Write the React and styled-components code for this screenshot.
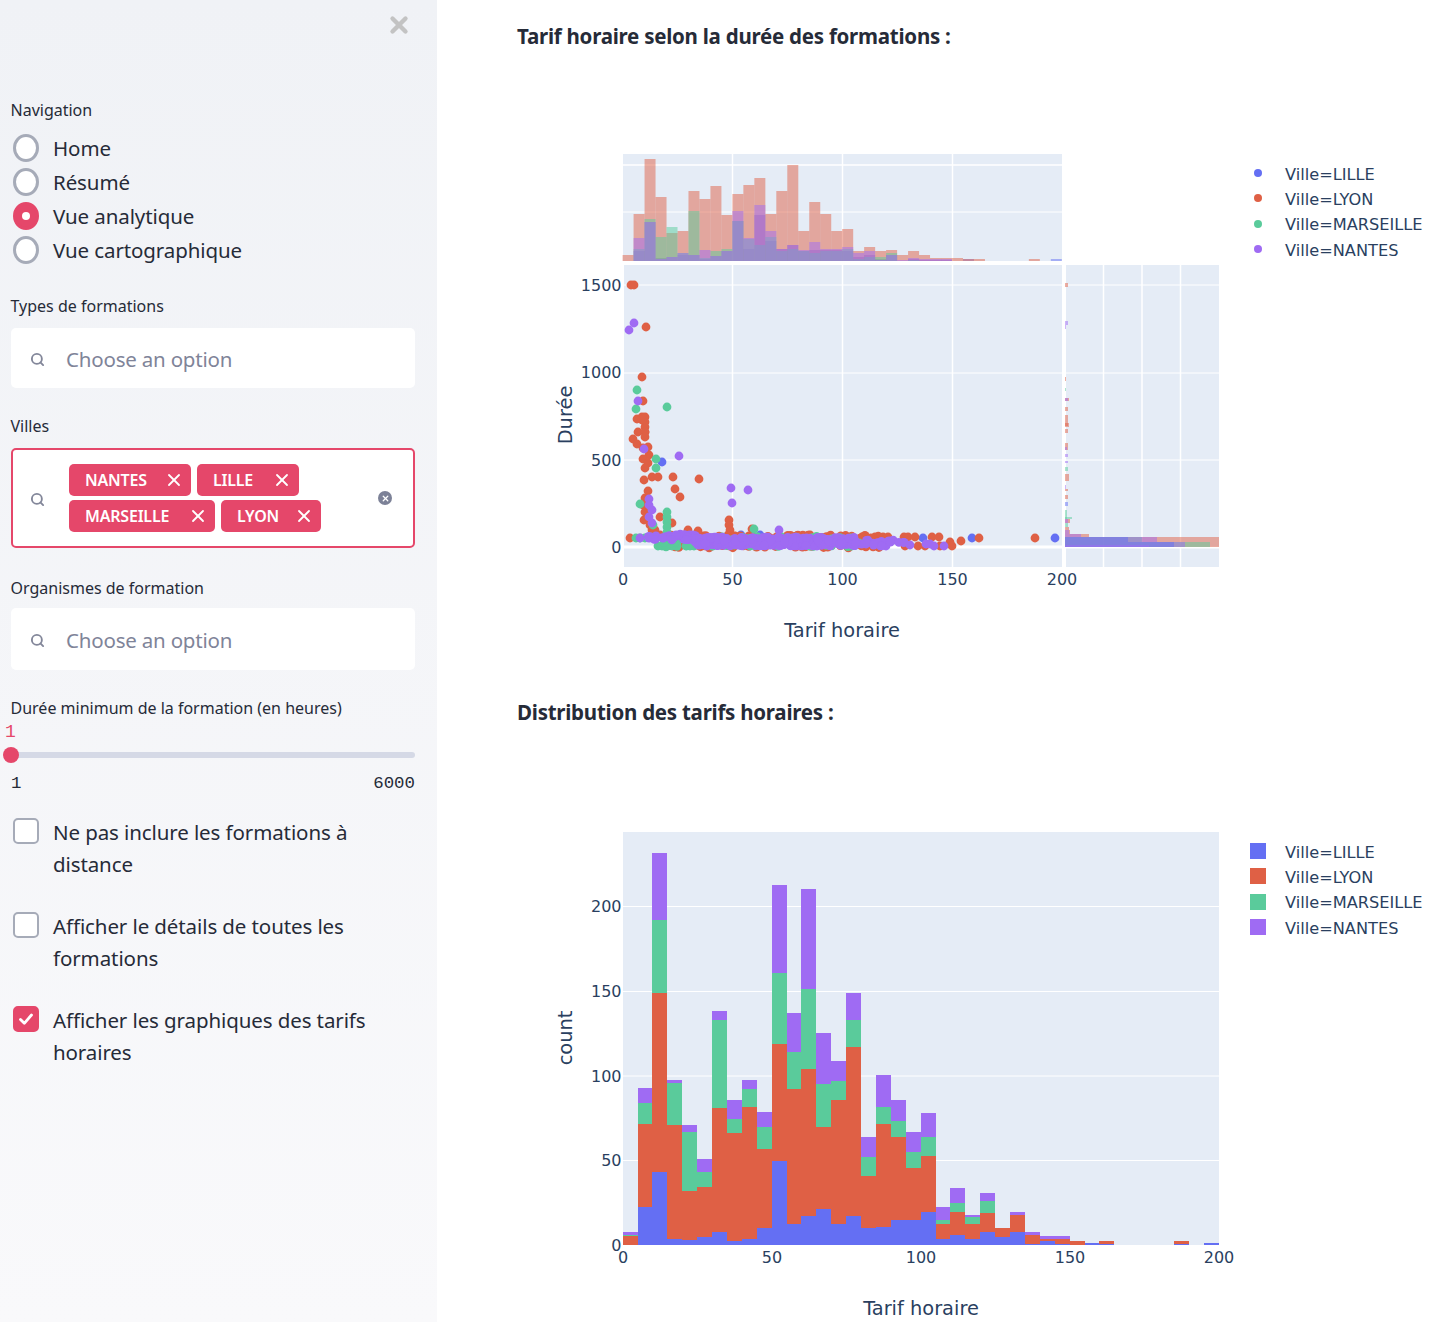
import React from 'react';
import styled, { createGlobalStyle } from 'styled-components';
import { Search, X } from 'lucide-react';

const RED = '#DF6045';
const BLUE = '#646FF3';
const GREEN = '#5ACB9B';
const PURPLE = '#9F6BF3';
const ACCENT = '#E5476A';
const CITY = [BLUE, RED, GREEN, PURPLE];

const GlobalStyle = createGlobalStyle`
    html, body {
        margin: 0;
        padding: 0;
        background: #fff;
        overflow: hidden;
    }
`;

const Page = styled.div`
    display: flex;
    width: 1453px;
    height: 1322px;
    overflow: hidden;
    font-family: 'Noto Sans', sans-serif;
    color: #262b38;
`;

const Sidebar = styled.aside`
    box-sizing: border-box;
    width: 437px;
    flex: none;
    padding: 0 22px 0 11px;
    background: linear-gradient(180deg, #f0f2f6 0%, #f9f9fb 100%);
`;

const CloseRow = styled.div`
    display: flex;
    justify-content: flex-end;
    height: 100px;
    padding: 12px 3px 0 0;
    box-sizing: border-box;
    color: #c3c3c3;
`;

const Field = styled.div`
    margin-top: ${({ $top }) => $top || 0}px;
`;

const Label = styled.div`
    font-size: 16px;
    line-height: 20px;
    margin-left: -0.5px;
    margin-bottom: ${({ $gap }) => $gap || 12}px;
`;

const Radio = styled.div`
    display: flex;
    align-items: center;
    height: 34px;
    padding-left: 2px;
    font-size: 20.5px;
    letter-spacing: -0.1px;
`;

const RadioDot = styled.span`
    box-sizing: border-box;
    flex: none;
    width: 26px;
    height: 28px;
    margin-right: 14px;
    border-radius: 50%;
    display: flex;
    align-items: center;
    justify-content: center;
    border: 3px solid ${({ $on }) => ($on ? ACCENT : '#a6abb8')};
    background: ${({ $on }) => ($on ? ACCENT : '#fff')};
    &::after {
        content: '';
        display: ${({ $on }) => ($on ? 'block' : 'none')};
        width: 8px;
        height: 8px;
        border-radius: 50%;
        background: #fff;
    }
`;

const SelectBox = styled.div`
    box-sizing: border-box;
    display: flex;
    align-items: center;
    height: ${({ $h }) => $h}px;
    padding-left: 19px;
    background: #fff;
    border-radius: 5px;
    border: ${({ $active }) => ($active ? `2px solid ${ACCENT}` : 'none')};
    ${({ $active }) => $active && 'padding-left: 17px; padding-right: 21px;'}
`;

const SearchIcon = styled(Search)`
    flex: none;
    width: 15px;
    height: 15px;
    margin-top: 3px;
    color: #83879a;
`;

const Placeholder = styled.span`
    margin: 2px 0 0 21px;
    font-size: 20.5px;
    letter-spacing: -0.2px;
    color: #7f8499;
`;

const TagWrap = styled.div`
    flex: 1;
    display: flex;
    flex-wrap: wrap;
    gap: 4px 6px;
    width: 290px;
    margin-left: 24px;
`;

const Tag = styled.span`
    box-sizing: border-box;
    display: flex;
    align-items: center;
    justify-content: space-between;
    width: ${({ $w }) => $w}px;
    height: 32px;
    padding: 0 7px 0 16px;
    border-radius: 5px;
    background: ${ACCENT};
    color: #fff;
    font-size: 16px;
    font-weight: 600;
    letter-spacing: -0.2px;
`;

const ClearDot = styled.span`
    flex: none;
    display: flex;
    align-items: center;
    justify-content: center;
    width: 14px;
    height: 14px;
    border-radius: 50%;
    background: #7c8197;
    color: #fff;
`;

const SliderValue = styled.div`
    font-family: 'Liberation Mono', monospace;
    font-size: 18px;
    line-height: 20px;
    color: ${ACCENT};
    margin: -8px 0 0 -6px;
`;

const Track = styled.div`
    position: relative;
    height: 6px;
    margin-top: 10px;
    border-radius: 3px;
    background: #d5d9e6;
`;

const Thumb = styled.span`
    position: absolute;
    left: -8px;
    top: -5px;
    width: 16px;
    height: 16px;
    border-radius: 50%;
    background: ${ACCENT};
`;

const SliderEnds = styled.div`
    display: flex;
    justify-content: space-between;
    margin-top: 16px;
    font-family: 'Liberation Mono', monospace;
    font-size: 17.4px;
    line-height: 20px;
`;

const Check = styled.div`
    display: flex;
    align-items: flex-start;
    padding-left: 2px;
    margin-top: ${({ $top }) => $top}px;
    font-size: 20.5px;
    letter-spacing: -0.1px;
    line-height: 32px;
`;

const CheckText = styled.span`
    margin-top: -1px;
`;

const CheckBox = styled.span`
    box-sizing: border-box;
    flex: none;
    display: flex;
    align-items: center;
    justify-content: center;
    width: 26px;
    height: 26px;
    margin: 1px 14px 0 0;
    border-radius: 5px;
    border: 2px solid ${({ $on }) => ($on ? ACCENT : '#a6abb8')};
    background: ${({ $on }) => ($on ? ACCENT : '#fff')};
`;

const Main = styled.main`
    flex: 1;
    min-width: 0;
    padding: 20px 0 0 80px;
`;

const Heading = styled.h2`
    margin: 0;
    font-size: 20.5px;
    letter-spacing: -0.25px;
    line-height: 32px;
    font-weight: 700;
    color: #262b38;
`;

const ChartSvg = styled.svg`
    display: block;
    margin-top: ${({ $top }) => $top || 0}px;
    overflow: visible;
`;

const Tick = styled.text`
    font-family: 'DejaVu Sans', Verdana, sans-serif;
    font-size: 16px;
    fill: #2a3f5f;
`;

const LegendText = styled(Tick)`
    font-size: 16.2px;
`;

const AxisTitle = styled.text`
    font-family: 'DejaVu Sans', Verdana, sans-serif;
    font-size: 19.4px;
    fill: #2a3f5f;
`;

// hauteurs en px depuis la base, cumulees : lille, lyon, marseille, nantes
const STACK = [
    [0, 9, 10, 13], [38, 121, 142, 157], [73, 252, 325, 392], [6, 120, 162, 165],
    [5, 54, 113, 120], [8, 58, 73, 86], [13, 137, 225, 234], [4, 112, 126, 145],
    [6, 138, 156, 165], [17, 96, 118, 133], [84, 201, 272, 360], [21, 156, 193, 232],
    [29, 176, 256, 356], [36, 118, 161, 212], [21, 145, 164, 184], [29, 198, 225, 252],
    [17, 69, 88, 108], [18, 121, 138, 170], [25, 108, 124, 145], [25, 77, 93, 113],
    [33, 89, 108, 132], [6, 21, 25, 38], [10, 33, 42, 57], [6, 21, 28, 30],
    [13, 32, 44, 52], [8, 17, 17, 17], [13, 30, 30, 33], [1, 10, 10, 13],
    [4, 6, 6, 9], [1, 6, 6, 9], [0, 4, 4, 4], [2, 2, 2, 2], [1, 4, 4, 4],
    [0, 0, 0, 0], [0, 0, 0, 0], [0, 0, 0, 0], [0, 0, 0, 0], [1, 4, 4, 4],
    [0, 0, 0, 0], [2, 2, 2, 2],
];

const TOP_RED = [6, 47, 102, 64, 28, 30, 70, 62, 75, 46, 67, 76, 83, 47, 70, 96, 30, 59, 47, 30, 32, 10, 14, 10, 11, 6, 10, 6, 3, 3, 3, 2, 2, 0, 0, 0, 0, 2];
const TOP_BLUE = [0, 10, 39, 3, 4, 6, 6, 2, 5, 10, 40, 12, 46, 20, 12, 16, 10, 11, 11, 11, 10, 4, 6, 2, 6, 0, 2, 1, 1, 1, 0, 2, 0, 0, 0, 0, 0, 0, 0, 2];
const TOP_GREEN = [0, 12, 42, 24, 34, 8, 50, 3, 10, 12, 40, 22, 16, 24, 10, 12, 10, 8, 10, 10, 12, 2, 4, 4, 8, 0, 1];
const TOP_PURPLE = [0, 23, 39, 2, 4, 8, 6, 11, 5, 10, 50, 23, 56, 30, 12, 16, 11, 19, 12, 12, 14, 8, 10, 1, 6, 1, 3, 2, 2, 2];

// barres de droite : y, hauteur, largeur, ville
const SIDE = [
    [283, 4, 3, 1], [321, 4, 3, 3], [325, 4, 1, 3], [377, 4, 1, 1], [388, 3, 1, 2],
    [398, 3, 4, 1], [398, 3, 3, 3], [407, 4, 3, 1], [415, 11, 3, 1], [423, 4, 4, 1],
    [429, 4, 3, 1], [443, 7, 3, 1], [447, 3, 2, 3], [454, 3, 3, 3], [461, 2, 3, 3],
    [467, 4, 3, 2], [474, 7, 4, 1], [485, 4, 1, 3], [489, 2, 3, 1], [495, 4, 3, 1],
    [502, 4, 3, 0], [510, 9, 2, 2], [517, 2, 7, 2], [519, 4, 5, 1], [519, 4, 3, 3],
    [523, 4, 3, 2], [527, 3, 4, 1], [530, 4, 5, 1], [530, 4, 4, 3],
    [534, 3, 24, 1], [534, 3, 16, 3],
    [537, 5, 154, 1], [537, 5, 77, 2], [537, 5, 92, 3], [537, 5, 63, 0],
    [542, 5, 154, 1], [542, 5, 145, 2], [542, 5, 120, 3], [542, 5, 109, 0],
    [545, 2, 84, 3],
];

const P_RED = [
    [631, 285], [634, 285], [646, 327], [642, 377], [643, 401], [642, 417], [645, 417], [645, 422],
    [645, 427], [645, 432], [637, 419], [642, 420], [638, 432], [645, 432], [645, 437], [633, 439],
    [637, 444], [643, 448], [648, 447], [649, 455], [643, 459], [648, 463], [645, 468], [644, 480],
    [652, 477], [658, 477], [673, 477], [699, 479], [675, 489], [680, 497], [648, 491], [645, 498],
    [643, 505], [645, 512], [644, 520], [660, 517], [672, 523], [688, 530], [698, 531], [729, 520],
    [729, 525], [730, 530], [728, 535], [752, 529], [630, 538], [652, 530], [783, 538], [810, 535],
    [847, 537], [862, 537], [875, 537], [883, 537], [888, 537], [904, 537], [908, 537], [915, 537],
    [932, 537], [939, 537], [950, 542], [952, 546], [961, 541], [979, 538], [1035, 538], [918, 546],
    [905, 546], [925, 546], [940, 546], [650, 525], [655, 530], [660, 535], [665, 540],
];
const P_GREEN = [
    [637, 390], [636, 409], [667, 407], [656, 459], [656, 468], [640, 504], [667, 512], [667, 517],
    [667, 522], [667, 527], [667, 532], [653, 525], [754, 529], [658, 546], [662, 546], [667, 546],
    [672, 546], [686, 546], [690, 546], [694, 546], [699, 540], [716, 538], [722, 537], [750, 546],
    [636, 538], [640, 538], [645, 538],
];
const P_PURPLE = [
    [634, 323], [629, 330],
    [638, 401], [644, 449], [679, 456], [731, 488], [748, 490], [732, 503], [649, 499], [649, 505],
    [652, 510], [649, 517], [652, 523], [779, 530], [930, 544], [934, 546], [944, 546], [926, 544],
    [910, 545], [886, 546], [866, 544], [855, 545], [640, 538],
];
const P_BLUE = [[662, 462], [923, 538], [972, 538], [1055, 538], [741, 535], [760, 535]];

// la bande dense autour de zero
function band(seed, from, to, count, y0, spread) {
    const points = [];
    let s = seed;
    for (let i = 0; i < count; i++) {
        s = (s * 9301 + 49297) % 233280;
        const a = s / 233280;
        s = (s * 9301 + 49297) % 233280;
        const b = s / 233280;
        points.push([from + a * (to - from), y0 + b * spread]);
    }
    return points;
}

const ALL_POINTS = [
    { color: BLUE, points: [...P_BLUE, ...band(5, 700, 860, 30, 536, 10)] },
    { color: RED, points: [...P_RED, ...band(11, 668, 880, 200, 535, 13)] },
    { color: GREEN, points: [...P_GREEN, ...band(23, 650, 860, 80, 536, 11)] },
    {
        color: PURPLE,
        points: [
            ...P_PURPLE,
            ...band(37, 648, 700, 45, 534, 6),
            ...band(41, 695, 855, 340, 537, 9),
            ...band(53, 850, 905, 24, 540, 6),
        ],
    },
];

const TOP_SERIES = [
    [TOP_BLUE, BLUE],
    [TOP_RED, RED],
    [TOP_GREEN, GREEN],
    [TOP_PURPLE, PURPLE],
];

function Legend({ items, square, y }) {
    return items.map((name, i) => (
        <g key={name}>
            {square ? (
                <rect x="1250" y={y[i] - 8} width="16" height="16" fill={CITY[i]} />
            ) : (
                <circle cx="1258" cy={y[i]} r="4" fill={CITY[i]} />
            )}
            <LegendText x="1285" y={y[i] + 7 - (i === 2 ? 1 : 0)}>
                Ville={name}
            </LegendText>
        </g>
    ));
}

const CITIES = ['LILLE', 'LYON', 'MARSEILLE', 'NANTES'];

function JointChart() {
    return (
        <ChartSvg width="936" height="636" viewBox="517 60 936 636" $top={8}>
            <rect x="623" y="154" width="439" height="107" fill="#E5ECF6" />
            {[165, 212].map((y) => (
                <line key={y} x1="623" x2="1062" y1={y} y2={y} stroke="#fff" strokeWidth={y === 165 ? 1.5 : 1} />
            ))}
            {[732.5, 842.5, 952.5].map((x) => (
                <line key={x} x1={x} x2={x} y1="154" y2="261" stroke="#fff" strokeWidth="1.5" />
            ))}
            {TOP_SERIES.map(([values, color]) =>
                values.map((h, i) =>
                    h ? (
                        <rect key={`${color}${i}`} x={622.6 + i * 10.98} y={261 - h} width="10.98" height={h} fill={color} opacity="0.5" />
                    ) : null
                )
            )}

            <rect x="624" y="265" width="438" height="302" fill="#E5ECF6" />
            {[285, 373, 460].map((y) => (
                <line key={y} x1="624" x2="1062" y1={y} y2={y} stroke="#fff" />
            ))}
            <line x1="624" x2="1062" y1="547" y2="547" stroke="#fff" strokeWidth="3" />
            {[732.5, 842.5, 952.5].map((x) => (
                <line key={x} x1={x} x2={x} y1="265" y2="567" stroke="#fff" strokeWidth="1.5" />
            ))}
            {ALL_POINTS.map(({ color, points }) =>
                points.map(([x, y], i) => <circle key={`${color}${i}`} cx={x} cy={y} r="4.4" fill={color} />)
            )}

            <rect x="1066" y="265" width="153" height="302" fill="#E5ECF6" />
            {[285, 373, 460].map((y) => (
                <line key={y} x1="1066" x2="1219" y1={y} y2={y} stroke="#fff" />
            ))}
            <line x1="1066" x2="1219" y1="547.5" y2="547.5" stroke="#fff" strokeWidth="2" />
            {[1103.5, 1142, 1180.5].map((x) => (
                <line key={x} x1={x} x2={x} y1="265" y2="567" stroke="#fff" strokeWidth="1.5" />
            ))}
            {SIDE.map(([y, h, w, c], i) => (
                <rect key={i} x="1065" y={y} width={w} height={h} fill={CITY[c]} opacity="0.5" />
            ))}

            {[['1500', 285], ['1000', 372], ['500', 460], ['0', 547]].map(([t, y]) => (
                <Tick key={t} x="621.5" y={y + 6} textAnchor="end">
                    {t}
                </Tick>
            ))}
            {[['0', 623], ['50', 732.5], ['100', 842.5], ['150', 952.5], ['200', 1062]].map(([t, x]) => (
                <Tick key={t} x={x} y="585" textAnchor="middle">
                    {t}
                </Tick>
            ))}
            <AxisTitle x="842" y="637" textAnchor="middle">
                Tarif horaire
            </AxisTitle>
            <AxisTitle transform="translate(572 415) rotate(-90)" textAnchor="middle">
                Durée
            </AxisTitle>
            <Legend items={CITIES} y={[173, 198, 224, 249]} />
        </ChartSvg>
    );
}

function StackChart() {
    const base = 1245;
    return (
        <ChartSvg width="936" height="594" viewBox="517 728 936 594">
            <rect x="623" y="832" width="596" height="413" fill="#E5ECF6" />
            {[906.5, 991.5, 1076, 1160.5].map((y) => (
                <line key={y} x1="623" x2="1219" y1={y} y2={y} stroke="#fff" strokeWidth="1" />
            ))}
            {STACK.map((tops, i) =>
                tops.map((top, k) => {
                    const from = k === 0 ? 0 : tops[k - 1];
                    if (top <= from) return null;
                    return <rect key={k} x={622.6 + i * 14.9} y={base - top} width="14.9" height={top - from} fill={CITY[k]} shapeRendering="crispEdges" />;
                })
            )}
            {[['0', 1245], ['50', 1160], ['100', 1076], ['150', 991], ['200', 906]].map(([t, y]) => (
                <Tick key={t} x="621.5" y={y + 6} textAnchor="end">
                    {t}
                </Tick>
            ))}
            {[['0', 623], ['50', 772], ['100', 921], ['150', 1070], ['200', 1219]].map(([t, x]) => (
                <Tick key={t} x={x} y="1263" textAnchor="middle">
                    {t}
                </Tick>
            ))}
            <AxisTitle x="921" y="1315" textAnchor="middle">
                Tarif horaire
            </AxisTitle>
            <AxisTitle transform="translate(572 1038) rotate(-90)" textAnchor="middle">
                count
            </AxisTitle>
            <Legend items={CITIES} square y={[851, 876, 902, 927]} />
        </ChartSvg>
    );
}

function App() {
    return (
        <Page>
            <GlobalStyle />
            <Sidebar>
                <CloseRow>
                    <X size={26} strokeWidth={4} />
                </CloseRow>

                <Label $gap={11}>Navigation</Label>
                {['Home', 'Résumé', 'Vue analytique', 'Vue cartographique'].map((name) => (
                    <Radio key={name}>
                        <RadioDot $on={name === 'Vue analytique'} />
                        {name}
                    </Radio>
                ))}

                <Field $top={29}>
                    <Label>Types de formations</Label>
                    <SelectBox $h={60}>
                        <SearchIcon strokeWidth={3} />
                        <Placeholder>Choose an option</Placeholder>
                    </SelectBox>
                </Field>

                <Field $top={28}>
                    <Label>Villes</Label>
                    <SelectBox $h={100} $active>
                        <SearchIcon strokeWidth={3} />
                        <TagWrap>
                            {[['NANTES', 122], ['LILLE', 102], ['MARSEILLE', 146], ['LYON', 100]].map(([name, w]) => (
                                <Tag key={name} $w={w}>
                                    {name}
                                    <X size={20} strokeWidth={2.2} />
                                </Tag>
                            ))}
                        </TagWrap>
                        <ClearDot>
                            <X size={9} strokeWidth={3.5} />
                        </ClearDot>
                    </SelectBox>
                </Field>

                <Field $top={30}>
                    <Label $gap={10}>Organismes de formation</Label>
                    <SelectBox $h={62}>
                        <SearchIcon strokeWidth={3} />
                        <Placeholder>Choose an option</Placeholder>
                    </SelectBox>
                </Field>

                <Field $top={28}>
                    <Label>Durée minimum de la formation (en heures)</Label>
                    <SliderValue>1</SliderValue>
                    <Track>
                        <Thumb />
                    </Track>
                    <SliderEnds>
                        <span>1</span>
                        <span>6000</span>
                    </SliderEnds>
                </Field>

                <Check $top={23}>
                    <CheckBox />
                    <CheckText>
                        Ne pas inclure les formations à
                        <br />
                        distance
                    </CheckText>
                </Check>
                <Check $top={31}>
                    <CheckBox />
                    <CheckText>
                        Afficher le détails de toutes les
                        <br />
                        formations
                    </CheckText>
                </Check>
                <Check $top={31}>
                    <CheckBox $on>
                        <svg width="18" height="18" viewBox="0 0 18 18" fill="none" stroke="#fff" strokeWidth="2.8" strokeLinecap="round" strokeLinejoin="round">
                            <path d="M3.5 9.5l3.8 3.8 7.2-8.3" />
                        </svg>
                    </CheckBox>
                    <CheckText>
                        Afficher les graphiques des tarifs
                        <br />
                        horaires
                    </CheckText>
                </Check>
            </Sidebar>

            <Main>
                <Heading>Tarif horaire selon la durée des formations :</Heading>
                <JointChart />
                <Heading>Distribution des tarifs horaires :</Heading>
                <StackChart />
            </Main>
        </Page>
    );
}

export default App;
